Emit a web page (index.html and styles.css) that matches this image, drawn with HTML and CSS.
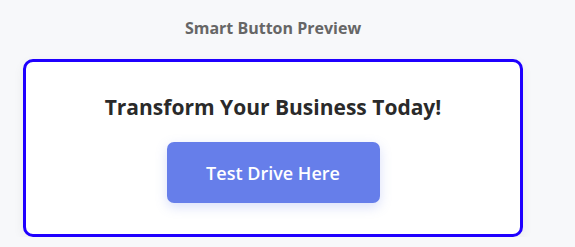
FILE: index.html
```html
<!DOCTYPE html>
<html lang="en">
<head>
    <meta charset="UTF-8">
    <title>Smart Button Preview</title>
    <link rel="stylesheet" href="styles.css">
</head>
<body>
    <div class="preview">
        <h3 class="preview-title">Smart Button Preview</h3>
        <div class="preview-card">
            <h2 class="card-heading">Transform Your Business Today!</h2>
            <button class="smart-btn">Test Drive Here</button>
        </div>
    </div>
</body>
</html>
```
FILE: styles.css
```css
body {
    margin: 0;
    font-family: "Open Sans", "Noto Sans", sans-serif;
    background-color: #f7f8fa;
    color: #222;
}

.preview {
    width: 500px;
    margin-left: 23px;
    padding-top: 17px;
}

.preview-title {
    margin: 0 0 20px;
    text-align: center;
    font-size: 16px;
    font-weight: 700;
    color: #666;
}

.preview-card {
    background-color: white;
    border: 3px solid #1f00ff;
    border-radius: 10px;
    padding: 31px 20px 31px;
    text-align: center;
    box-shadow: 0 4px 12px rgba(0, 0, 0, 0.06);
}

.card-heading {
    margin: 0 0 21px;
    font-size: 21px;
    font-weight: 700;
    color: #2a2a2a;
}

.smart-btn {
    width: 213px;
    height: 61px;
    border: none;
    border-radius: 7px;
    background-color: #667eea;
    color: white;
    font-family: "Open Sans", sans-serif;
    font-size: 18px;
    font-weight: 600;
    cursor: pointer;
    box-shadow: 0 4px 12px rgba(102, 126, 234, 0.25);
}
```
